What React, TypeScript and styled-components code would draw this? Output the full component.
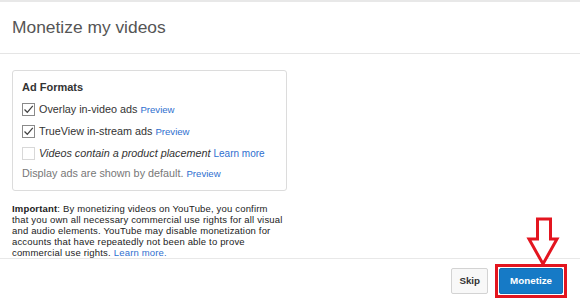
import React from 'react'
import styled, { createGlobalStyle } from 'styled-components'

const GlobalStyle = createGlobalStyle`
    body {
        margin: 0;
        background: #fff;
        font-family: "Liberation Sans", Arial, sans-serif;
    }
`

const Dialog = styled.div`
    position: relative;
    width: 580px;
    height: 302px;
    border-top: 2px solid #e8e8e8;
    box-sizing: border-box;
    overflow: hidden;
    background: #fff;
`

const Header = styled.div`
    height: 51px;
    display: flex;
    align-items: center;
    padding: 0 12px;
    border-bottom: 1px solid #e5e5e5;
`

const Title = styled.h2`
    margin: 0;
    font-weight: normal;
    font-size: 17.4px;
    color: #555;
`

const Body = styled.div`
    padding: 16px 12px 0;
`

const FormatsBox = styled.div`
    width: 275px;
    height: 121px;
    box-sizing: border-box;
    border: 1px solid #dcdcdc;
    border-radius: 3px;
    padding: 10px 9px 0;
`

const BoxTitle = styled.div`
    font-size: 11px;
    font-weight: bold;
    color: #333;
    margin-bottom: 5px;
`

const OptionRow = styled.label`
    display: flex;
    align-items: center;
    height: 22px;
    font-size: 10.8px;
    color: #333;
`

const Box = styled.span<{ $disabled?: boolean }>`
    width: 13px;
    height: 13px;
    margin-right: 4px;
    box-sizing: border-box;
    border: 1px solid ${({ $disabled }) => ($disabled ? '#d8d8d8' : '#8a8a8a')};
    background: #fff;
    display: flex;
    align-items: center;
    justify-content: center;
`

const OptionText = styled.span<{ $italic?: boolean }>`
    font-style: ${({ $italic }) => ($italic ? 'italic' : 'normal')};
    white-space: nowrap;
`

const Link = styled.a<{ $size?: number }>`
    display: inline-block;
    color: #2f6fcf;
    font-size: ${({ $size }) => $size || 9.6}px;
    text-decoration: none;
    margin-left: 3px;
    font-style: normal;
    white-space: nowrap;
`

const Hint = styled.div`
    font-size: 10.8px;
    color: #777;
    margin-top: 3px;
`

const Notice = styled.p`
    margin: 12px 0 0;
    width: 274px;
    font-size: 9.5px;
    letter-spacing: 0.17px;
    line-height: 11px;
    color: #222;

    b {
        display: inline-block;
        font-weight: bold;
    }
`

const Footer = styled.div`
    position: absolute;
    left: 0;
    right: 0;
    top: 256px;
    height: 46px;
    border-top: 1px solid #e8e8e8;
    display: flex;
    justify-content: flex-end;
    align-items: center;
    gap: 7px;
    padding: 0 13px 2px 0;
    box-sizing: border-box;
`

const Button = styled.button<{ $primary?: boolean }>`
    height: 26px;
    padding: 0 ${({ $primary }) => ($primary ? 10 : 7)}px;
    font-family: inherit;
    font-size: 9.8px;
    font-weight: bold;
    border-radius: 2px;
    border: 1px solid ${({ $primary }) => ($primary ? '#126db3' : '#d3d3d3')};
    background: ${({ $primary }) => ($primary ? '#167ac6' : '#f8f8f8')};
    color: ${({ $primary }) => ($primary ? '#fff' : '#333')};
`

const Highlight = styled.span`
    display: flex;
    border: 3px solid #e3151f;
    padding: 1px;
`

const Arrow = styled.svg`
    position: absolute;
    left: 526px;
    top: 214px;
`

const Check = () => (
    <svg width="11" height="11" viewBox="0 0 11 11">
        <path d="M1.5 5.5 L4.3 8.3 L9.8 1.8" fill="none" stroke="#444" strokeWidth="1.3" />
    </svg>
)

export default function App() {
    return (
        <>
            <GlobalStyle />
            <Dialog>
                <Header>
                    <Title>Monetize my videos</Title>
                </Header>
                <Body>
                    <FormatsBox>
                        <BoxTitle>Ad Formats</BoxTitle>
                        <OptionRow>
                            <Box><Check /></Box>
                            <OptionText>Overlay in-video ads</OptionText>
                            <Link>Preview</Link>
                        </OptionRow>
                        <OptionRow>
                            <Box><Check /></Box>
                            <OptionText>TrueView in-stream ads</OptionText>
                            <Link>Preview</Link>
                        </OptionRow>
                        <OptionRow>
                            <Box $disabled />
                            <OptionText $italic>Videos contain a product placement</OptionText>
                            <Link $size={10}>Learn more</Link>
                        </OptionRow>
                        <Hint>
                            Display ads are shown by default.
                            <Link>Preview</Link>
                        </Hint>
                    </FormatsBox>
                    <Notice>
                        <b>Important</b>: By monetizing videos on YouTube, you confirm that you own all
                        necessary commercial use rights for all visual and audio elements. YouTube may
                        disable monetization for accounts that have repeatedly not been able to prove
                        commercial use rights.<Link $size={9.5}>Learn more.</Link>
                    </Notice>
                </Body>
                <Footer>
                    <Button>Skip</Button>
                    <Highlight>
                        <Button $primary>Monetize</Button>
                    </Highlight>
                </Footer>
                <Arrow width="34" height="52" viewBox="0 0 34 52">
                    <polygon
                        points="11.5,3 24.5,3 24.5,23 31,23 17,48 3,23 11.5,23"
                        fill="#fff"
                        stroke="#e3151f"
                        strokeWidth="3"
                        strokeLinejoin="miter"
                    />
                </Arrow>
            </Dialog>
        </>
    )
}
